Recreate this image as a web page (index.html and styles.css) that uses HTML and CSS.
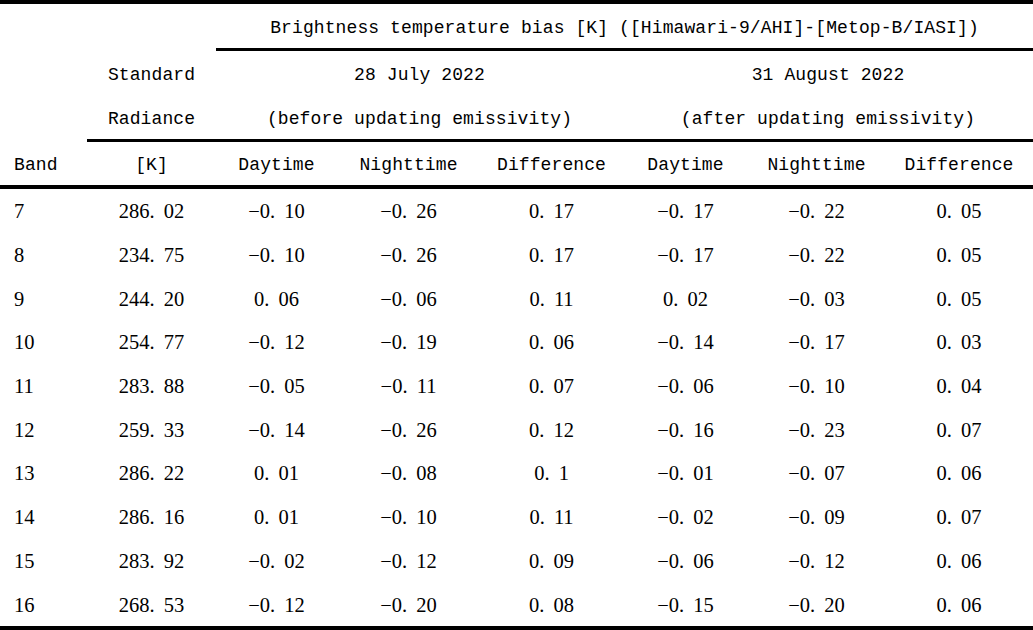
FILE: index.html
```html
<!DOCTYPE html>
<html lang="en">
<head>
<meta charset="utf-8">
<title>Brightness temperature bias</title>
<link rel="stylesheet" href="styles.css">
</head>
<body>
<div class="table">
  <div class="cell blank-a"></div>
  <div class="cell head span-top rule-mid">Brightness temperature bias [K] ([Himawari-9/AHI]-[Metop-B/IASI])</div>

  <div class="cell blank-b"></div>
  <div class="cell head c2 rb">Standard</div>
  <div class="cell head span-a rb">28 July 2022</div>
  <div class="cell head span-b rb">31 August 2022</div>

  <div class="cell head c2 rc rule-mid">Radiance</div>
  <div class="cell head span-a rc rule-mid">(before updating emissivity)</div>
  <div class="cell head span-b rc rule-mid">(after updating emissivity)</div>

  <div class="cell head left rd rule-thick">Band</div>
  <div class="cell head rd rule-thick">[K]</div>
  <div class="cell head rd rule-thick">Daytime</div>
  <div class="cell head rd rule-thick">Nighttime</div>
  <div class="cell head rd rule-thick">Difference</div>
  <div class="cell head rd rule-thick">Daytime</div>
  <div class="cell head rd rule-thick">Nighttime</div>
  <div class="cell head rd rule-thick">Difference</div>

  <div class="cell num left">7</div><div class="cell num">286. 02</div><div class="cell num">−0. 10</div><div class="cell num">−0. 26</div><div class="cell num">0. 17</div><div class="cell num">−0. 17</div><div class="cell num">−0. 22</div><div class="cell num">0. 05</div>
  <div class="cell num left">8</div><div class="cell num">234. 75</div><div class="cell num">−0. 10</div><div class="cell num">−0. 26</div><div class="cell num">0. 17</div><div class="cell num">−0. 17</div><div class="cell num">−0. 22</div><div class="cell num">0. 05</div>
  <div class="cell num left">9</div><div class="cell num">244. 20</div><div class="cell num">0. 06</div><div class="cell num">−0. 06</div><div class="cell num">0. 11</div><div class="cell num">0. 02</div><div class="cell num">−0. 03</div><div class="cell num">0. 05</div>
  <div class="cell num left">10</div><div class="cell num">254. 77</div><div class="cell num">−0. 12</div><div class="cell num">−0. 19</div><div class="cell num">0. 06</div><div class="cell num">−0. 14</div><div class="cell num">−0. 17</div><div class="cell num">0. 03</div>
  <div class="cell num left">11</div><div class="cell num">283. 88</div><div class="cell num">−0. 05</div><div class="cell num">−0. 11</div><div class="cell num">0. 07</div><div class="cell num">−0. 06</div><div class="cell num">−0. 10</div><div class="cell num">0. 04</div>
  <div class="cell num left">12</div><div class="cell num">259. 33</div><div class="cell num">−0. 14</div><div class="cell num">−0. 26</div><div class="cell num">0. 12</div><div class="cell num">−0. 16</div><div class="cell num">−0. 23</div><div class="cell num">0. 07</div>
  <div class="cell num left">13</div><div class="cell num">286. 22</div><div class="cell num">0. 01</div><div class="cell num">−0. 08</div><div class="cell num">0. 1</div><div class="cell num">−0. 01</div><div class="cell num">−0. 07</div><div class="cell num">0. 06</div>
  <div class="cell num left">14</div><div class="cell num">286. 16</div><div class="cell num">0. 01</div><div class="cell num">−0. 10</div><div class="cell num">0. 11</div><div class="cell num">−0. 02</div><div class="cell num">−0. 09</div><div class="cell num">0. 07</div>
  <div class="cell num left">15</div><div class="cell num">283. 92</div><div class="cell num">−0. 02</div><div class="cell num">−0. 12</div><div class="cell num">0. 09</div><div class="cell num">−0. 06</div><div class="cell num">−0. 12</div><div class="cell num">0. 06</div>
  <div class="cell num left">16</div><div class="cell num">268. 53</div><div class="cell num">−0. 12</div><div class="cell num">−0. 20</div><div class="cell num">0. 08</div><div class="cell num">−0. 15</div><div class="cell num">−0. 20</div><div class="cell num">0. 06</div>
</div>
</body>
</html>
```

FILE: styles.css
```css
html, body {
  margin: 0;
  padding: 0;
  background: #fff;
}

body {
  width: 1033px;
  height: 630px;
  overflow: hidden;
}

.table {
  display: grid;
  grid-template-columns: 87px 129px 121px 143px 143px 125px 137px 148px;
  grid-template-rows: 47px 44px 47px 47px repeat(10, 43.7px);
  border-top: 4px solid #000;
  border-bottom: 4px solid #000;
  color: #000;
}

.cell {
  box-sizing: border-box;
  display: flex;
  align-items: center;
  justify-content: center;
  white-space: nowrap;
}

.blank-a {
  grid-row: 1;
  grid-column: 1 / 3;
}

.blank-b {
  grid-row: 2 / 4;
  grid-column: 1;
}

.head {
  font-family: "Liberation Mono", "Noto Sans CJK SC", monospace;
  font-size: 18px;
  letter-spacing: 0.1px;
  padding-top: 3px;
}

.num {
  font-family: "Liberation Serif", "Noto Sans CJK SC", serif;
  font-size: 20.5px;
  word-spacing: 4px;
  padding-top: 2px;
}

.left {
  justify-content: flex-start;
  padding-left: 14px;
}

.span-top {
  grid-row: 1;
  grid-column: 3 / 9;
}

.c2 {
  grid-column: 2;
}

.rb { grid-row: 2; }
.rc { grid-row: 3; }
.rd { grid-row: 4; }

.span-a { grid-column: 3 / 6; }
.span-b { grid-column: 6 / 9; }

.rule-mid {
  border-bottom: 3px solid #000;
}

.rule-thick {
  border-bottom: 4px solid #000;
}
```
